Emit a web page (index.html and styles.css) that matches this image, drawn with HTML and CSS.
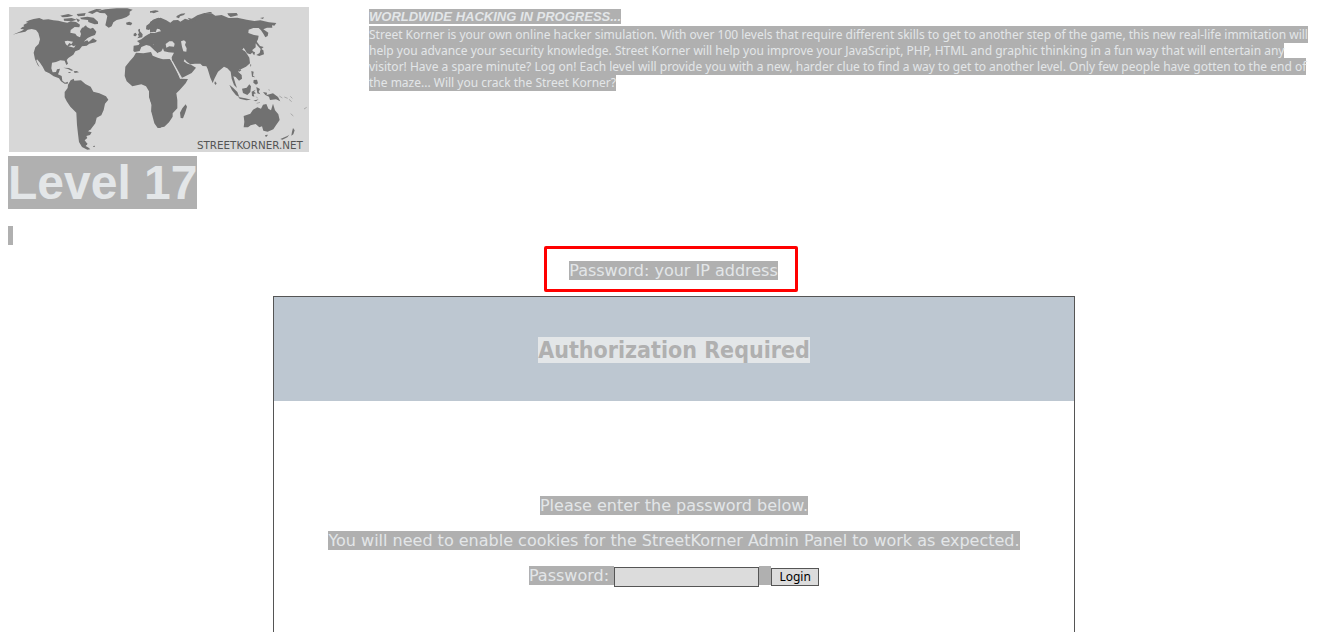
FILE: index.html
```
<!DOCTYPE html>
<html lang="en">
<head>
<meta charset="utf-8">
<title>Street Korner - Level 17</title>
<link rel="stylesheet" href="styles.css">
</head>
<body>
<header class="top">
  <svg class="map" viewBox="27 21 900 435" role="img" aria-label="World map">
    <rect class="sea" x="27" y="21" width="900" height="435"/>
    <g class="land">
      <path d="M38 104L50 99L66 92L72 88L61 87L66 82L73 79L70 75L77 71L84 68L77 66L88 61L101 57L118 54L130 59L145 58L160 61L175 62L190 66L202 68L212 64L228 66L240 74L238 82L224 81L212 90L211 98L226 101L231 108L240 112L243 102L240 94L246 83L259 80L271 86L279 83L289 95L285 105L274 109L263 114L251 125L262 121L266 126L279 115L291 122L286 127L268 131L260 137L246 139L238 149L226 154L220 164L205 174L200 180L204 191L199 195L194 182L181 181L168 186L156 188L154 205L158 217L168 216L171 208L180 206L177 216L174 223L185 228L187 242L195 248L204 245L203 251L194 251L183 244L177 235L161 229L148 220L135 214L128 200L120 188L111 178L109 182L119 202L113 195L105 178L101 158L106 142L116 132L120 118L115 99L108 90L95 87L83 89L76 95L56 99Z"/>
      <path d="M204 254L212 241L221 236L223 242L243 241L256 252L272 260L280 275L298 280L318 289L325 299L315 311L311 330L304 346L290 353L286 370L273 387L264 394L275 397L270 405L259 408L262 414L254 421L262 431L257 438L266 443L271 448L262 449L246 441L237 426L234 402L231 375L229 338L211 320L200 304L194 292L194 276L203 264Z"/>
      <path d="M190 203L207 204L220 211L214 212L204 207ZM221 214L230 213L237 217L224 219ZM205 217L211 216L212 219L205 219Z"/>
      <path d="M289 34L316 28L350 25L382 25L398 29L389 35L389 44L380 51L366 56L350 60L340 67L335 79L326 83L316 76L319 62L322 48L315 40L300 39ZM378 68L388 65L397 69L393 76L380 74Z"/>
      <path d="M181 47L205 42L220 47L203 51L188 52ZM191 56L215 54L230 59L215 64L192 62ZM230 42L257 39L254 47L234 49ZM240 53L262 50L281 53L294 65L294 72L284 73L273 69L265 66L264 60L244 58ZM263 37L289 27L306 28L288 36L277 42ZM228 55L240 60L234 67ZM251 81L258 76L262 84L253 88Z"/>
      <path d="M401 101L407 98L411 104L407 109L401 108ZM414 89L420 86L420 94L428 103L427 112L412 115L417 108L413 104L417 99ZM401 137L416 135L419 130L411 123L424 118L435 109L445 103L452 100L450 92L452 98L462 103L480 97V148L472 137L463 128L458 132L474 150L466 153L453 139L439 135L424 141L419 153L404 156L400 153ZM438 88L439 77L447 71L459 59L475 53L480 55V88L471 86L467 97L459 95L455 85L446 90ZM450 34L466 31L477 34L461 40Z"/>
      <path d="M408 158L430 160L453 156L458 167L477 175L482 180V384H475L469 372L463 348L454 334L455 315L447 292L447 274L438 259L424 253L397 259L380 244L374 228L376 200L389 184L401 170Z"/>
      <path d="M280 438L285 437L284 441L279 440ZM254 430L263 431L259 436ZM264 384L274 387L266 391Z"/>
      <g transform="translate(450 0)">
        <path d="M0 66L16 57L32 53L49 61L61 68L70 61L84 60L91 65L105 56L118 60L130 53L142 46L163 39L185 40L196 47L215 45L236 54L262 53L290 59L313 63L331 61L357 67L379 69L373 77L366 76L367 83L351 83L340 88L355 98L353 108L346 112L340 101L333 91L326 84L310 84L296 89L295 99L312 105L326 107L324 118L317 131L317 142L307 150L309 156L301 163L291 160L285 149L281 143L277 149L285 154L291 162L298 173L300 190L288 200L274 207L268 207L265 216L275 225L276 236L267 242L257 231L250 229L256 250L261 264L252 255L245 236L242 215L232 205L222 200L204 215L194 235L188 249L181 233L173 207L169 199L158 198L151 191L135 191L121 193L110 185L104 178L101 184L112 191L123 194L138 203L125 219L103 230L93 235L82 214L66 181L65 172L72 158L56 157L42 154L39 145L34 154L27 157L16 146L11 134L3 129L19 143L29 153L23 160L16 153L0 138V98L15 99L25 95L33 94L28 86L20 80L23 70L29 68L24 63L15 75L18 86L9 96H0Z"/>
        <path d="M0 175L16 177L27 175L39 178L59 177L65 184L77 205L90 236L114 237L107 250L89 270L79 280L82 300L82 325L68 340L68 350L57 367L43 380L23 384L13 370L4 335L5 314L0 298Z"/>
        <path d="M107 313L111 320L105 340L99 355L92 354L90 338L97 325ZM195 244L200 250L197 255L193 250ZM80 48L93 41L106 40L102 45L90 49L87 55L79 52ZM0 34L25 32L22 35L0 38ZM113 53L136 59L135 66L118 59ZM232 40L260 39L264 46L242 51L235 46ZM330 54L342 52L339 57ZM166 36L187 36L181 40Z"/>
        <path d="M317 116L321 126L330 138L341 141L334 147L340 151L342 163L328 168L319 165L329 159L332 147L321 135L312 121ZM305 152L315 157L313 166L309 162ZM300 193L304 194L302 201ZM264 210L271 207L274 211L268 215ZM304 213L311 215L309 227L316 232L306 230ZM311 240L321 239L324 250L318 254L310 248ZM238 254L249 263L262 276L268 291L258 286L246 271ZM265 291L286 295L303 299L289 301L269 296ZM276 266L290 263L298 253L303 259L301 276L292 285L279 279ZM305 275L317 269L312 275L318 280L311 282L313 290L306 288ZM319 261L330 267L326 275L331 283L322 280ZM310 302L326 298L318 304ZM339 276L351 278L350 285L369 280L384 291L391 304L378 298L360 300L357 290L346 285Z"/>
        <path d="M281 348L301 341L309 329L322 322L333 326L339 314L349 312L355 326L363 331L369 311L375 331L385 343L389 360L378 376L370 388L353 395L340 392L336 379L328 382L317 372L302 376L294 382L281 382L283 365ZM346 405L354 404L350 410L345 409ZM429 384L434 391L430 403L424 407L426 395ZM391 417L412 408L418 404L412 412L397 419Z"/>
      </g>
      <path class="islands" d="M838 288l9 6m6 -3l10 4m4 3l8 7m-4 -16l6 6m-5 46l8 7m32 -21l8 -5m-115 -53l5 2m-41 19l4 5m-3 15l10 -3"/>
      <g class="lakes">
        <path d="M194 124L203 122L219 125L214 133L208 129L202 137L197 132ZM205 139L215 135L221 139L227 136L222 143Z"/>
        <path d="M543 124L552 121L558 126L555 135L560 145L559 155L550 154L546 140ZM497 132L508 124L517 124L524 131L522 140L508 139L499 143Z"/>
        <path d="M512 180L519 185L546 233L542 236L530 214Z"/>
      </g>
    </g>
    <text class="map-name" x="591" y="447">STREETKORNER.NET</text>
  </svg>
  <div class="intro">
    <h2 class="tagline"><span class="sel">WORLDWIDE HACKING IN PROGRESS...</span></h2>
    <p class="about"><span class="sel">Street Korner is your own online hacker simulation. With over 100 levels that require different skills to get to another step of the game, this new real-life immitation will<br>help you advance your security knowledge. Street Korner will help you improve your JavaScript, PHP, HTML and graphic thinking in a fun way that will entertain any <br>visitor! Have a spare minute? Log on! Each level will provide you with a new, harder clue to find a way to get to another level. Only few people have gotten to the end of<br>the maze... Will you crack the Street Korner?</span></p>
  </div>
</header>
<h1 class="level"><span class="sel">Level 17</span></h1>
<p class="blank"><span class="sel">&nbsp;</span></p>
<main class="main">
  <p class="hint"><span class="sel">Password: your IP address</span></p>
  <section class="panel">
    <div class="panel-head"><h2 class="panel-title"><span class="sel-light">Authorization Required</span></h2></div>
    <form class="login">
      <p class="line"><span class="sel">Please enter the password below.</span></p>
      <p class="line"><span class="sel">You will need to enable cookies for the StreetKorner Admin Panel to work as expected.</span></p>
      <p class="line fields"><label class="sel label" for="password">Password:&nbsp;</label><input class="password" id="password" type="password"><span class="sel gap">&nbsp;</span><button class="submit" type="submit">Login</button></p>
    </form>
  </section>
</main>
</body>
</html>
```
FILE: styles.css
```
html {
  overflow: hidden;
}
body {
  margin: 7px -17px 0 8px;
  background: #fff;
  font: 16px/19px "DejaVu Sans", Verdana, sans-serif;
}
h1, h2, p {
  margin: 0;
}
.sel {
  background: #b0b0b0;
  color: #e3e6e8;
}
.sel-light {
  background: #e3e6e8;
  color: #b0b0b0;
}
.top {
  display: flex;
  gap: 60px;
  padding-left: 1px;
}
.map {
  flex: none;
  width: 300px;
  height: 145px;
}
.sea {
  fill: #d7d7d7;
}
.land {
  fill: #717171;
}
.islands {
  fill: none;
  stroke: #aaa;
  stroke-width: 3;
}
.lakes {
  fill: #d7d7d7;
}
.map-name {
  fill: #555;
  font: 31px "DejaVu Sans", Verdana, sans-serif;
}
.intro {
  flex: 1;
  white-space: nowrap;
}
.tagline {
  padding-bottom: 1px;
  font: italic bold 13px/19px "Liberation Sans", Arial, sans-serif;
}
.about {
  font: 12px/16px "Noto Sans", Tahoma, sans-serif;
}
.level {
  margin-top: 4px;
  font: bold 48px/53px "Liberation Sans", Arial, sans-serif;
}
.level .sel {
  display: inline-block;
}
.blank {
  margin-top: 17px;
}
.main {
  display: flex;
  flex-direction: column;
  align-items: center;
}
.hint {
  margin: 1px 6px 4px 0;
  padding: 12px 17px 9px 22px;
  border: 3px solid #f00;
  border-radius: 2px;
}
.panel {
  box-sizing: border-box;
  width: 802px;
  max-width: 100%;
  border: 1px solid #555;
  text-align: center;
}
.panel-head {
  padding: 41px 0 39px;
  background: #bdc7d1;
}
.panel-title {
  font: bold 23px/24px "DejaVu Sans Condensed", Tahoma, sans-serif;
}
.login {
  display: grid;
  gap: 16px;
  padding: 95px 0 64px;
}
.line {
  min-height: 19px;
}
.fields {
  display: flex;
  justify-content: center;
  align-items: flex-start;
}
.password {
  box-sizing: border-box;
  width: 145px;
  height: 20px;
  margin-top: 1px;
  border: 1px solid #555;
  background: #dcdcdc;
}
.gap {
  width: 12px;
}
.submit {
  box-sizing: border-box;
  width: 48px;
  height: 18px;
  margin-top: 2px;
  padding: 0;
  border: 1px solid #555;
  background: #dcdcdc;
  color: #000;
  font: 12px/16px "Noto Sans", Tahoma, sans-serif;
}
```
